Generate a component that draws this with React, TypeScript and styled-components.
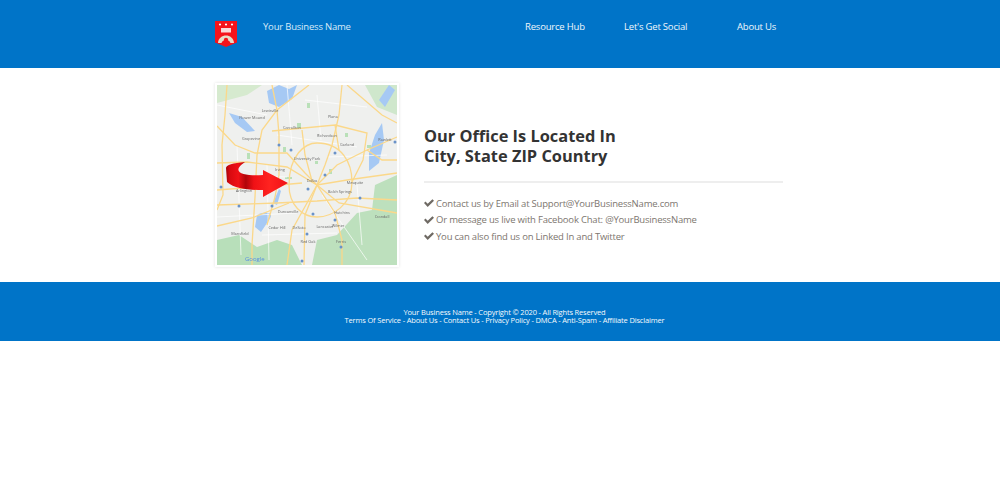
import React from "react";
import styled, { createGlobalStyle } from "styled-components";

const GlobalStyle = createGlobalStyle`
  html, body {
    margin: 0;
    padding: 0;
    background: #fff;
    font-family: "Open Sans", "Liberation Sans", sans-serif;
  }
`;

const Header = styled.header`
  height: 68px;
  background: #0074c8;
`;

const HeaderInner = styled.div`
  width: 570px;
  margin: 0 auto;
  display: flex;
  align-items: flex-start;
`;

const LogoWrap = styled.div`
  width: 48px;
  padding-top: 20px;
  flex-shrink: 0;
`;

const Brand = styled.a`
  width: 262px;
  padding-top: 19px;
  font-size: 9.5px;
  line-height: 15px;
  letter-spacing: -0.2px;
  color: #d9ebf8;
  flex-shrink: 0;
`;

const Nav = styled.nav`
  display: flex;
  padding-top: 19px;
`;

const NavLink = styled.a<{ $width: number }>`
  width: ${props => props.$width}px;
  font-size: 9.5px;
  line-height: 15px;
  letter-spacing: -0.2px;
  color: #f0f7fc;
`;

const Main = styled.main`
  width: 570px;
  height: 214px;
  margin: 0 auto;
  display: flex;
  align-items: flex-start;
`;

const MapFrame = styled.div`
  width: 180px;
  height: 180px;
  margin-top: 17px;
  margin-left: 2px;
  flex-shrink: 0;
  background: #fff;
  box-shadow: 0 0 0 2px #fff, 0 0 3px 2px rgba(0, 0, 0, 0.12);
  overflow: hidden;
`;

const Info = styled.div`
  margin-left: 27px;
  padding-top: 58px;
  width: 359px;
`;

const Title = styled.h1`
  margin: 0;
  font-size: 16.4px;
  line-height: 20px;
  font-weight: 700;
  color: #333;
`;

const Rule = styled.hr`
  margin: 15px 0 12px;
  border: 0;
  height: 2px;
  background: #eee;
`;

const List = styled.ul`
  margin: 0;
  padding: 0;
  list-style: none;
`;

const Item = styled.li`
  display: flex;
  align-items: center;
  gap: 2px;
  height: 16.5px;
  font-size: 9.5px;
  letter-spacing: -0.2px;
  color: #7d766f;
  white-space: nowrap;
`;

const Footer = styled.footer`
  height: 59px;
  background: #0074c8;
  padding: 26px 0 0 9px;
  box-sizing: border-box;
  text-align: center;
`;

const FooterLine = styled.div`
  font-size: 7.5px;
  line-height: 8px;
  letter-spacing: -0.17px;
  color: #f6fafd;
`;

const Check = () => (
  <svg width="10" height="8" viewBox="0 0 10 8">
    <path d="M0 4 L1.5 2.6 L3.7 4.8 L8.4 0.2 L10 1.7 L3.7 7.9 Z" fill="#6f6a64" />
  </svg>
);

const Logo = () => (
  <svg width="22" height="27" viewBox="0 0 22 27">
    <path d="M0 1 H22 V22.5 L11 27 L0 22.5 Z" fill="#f5131b" />
    <g fill="#fff">
      <circle cx="5" cy="4.5" r="1.1" />
      <circle cx="11" cy="4.5" r="1.1" />
      <circle cx="17" cy="4.5" r="1.1" />
    </g>
    <rect x="6" y="8" width="10" height="4.5" fill="#f9dada" />
    <path d="M3 23 C3.5 13 18.5 13 19 23 L15.5 23 C14.5 19 7.5 19 6.5 23 Z" fill="#e6dcc8" />
    <circle cx="11" cy="20" r="2.2" fill="#f5131b" />
    <rect x="10" y="20" width="2" height="4.5" fill="#f5131b" />
  </svg>
);

// [x, y, text]
const mapLabels: [number, number, string][] = [
  [35, 34, "Flower Mound"],
  [75, 44, "Carrollton"],
  [110, 52, "Richardson"],
  [130, 61, "Garland"],
  [34, 55, "Grapevine"],
  [90, 75, "University Park"],
  [63, 86, "Irving"],
  [95, 97, "Dallas"],
  [138, 99, "Mesquite"],
  [27, 107, "Arlington"],
  [123, 108, "Balch Springs"],
  [71, 128, "Duncanville"],
  [125, 129, "Hutchins"],
  [60, 144, "Cedar Hill"],
  [82, 144, "DeSoto"],
  [108, 143, "Lancaster"],
  [121, 142, "Wilmer"],
  [23, 150, "Mansfield"],
  [91, 158, "Red Oak"],
  [124, 158, "Ferris"],
  [116, 33, "Plano"],
  [53, 27, "Lewisville"],
  [168, 56, "Rowlett"],
  [165, 133, "Crandall"],
];

const roads = [
  "M0 41 L18 60 L38 68 L70 68 L88 88 L100 100 L122 118 L180 128",
  "M0 120 L60 118 L100 116 L140 113 L180 115",
  "M92 0 L60 25 L45 45 L40 70 L38 112 L35 160 L35 180",
  "M125 0 L122 30 L115 60 L108 80 L100 100 L88 130 L87 180",
  "M180 52 L150 65 L120 80 L100 100",
  "M0 78 L30 77 L70 82 L100 100 L130 95 L180 88",
  "M10 0 L8 30 L5 60 L6 110 L0 125",
  "M55 0 L60 25 L62 50 L62 90 L58 112 L50 140",
  "M100 100 L118 128 L125 155 L125 180",
  "M0 105 L40 102 L85 98",
  "M72 100 C72 70 88 58 100 58 C125 58 135 78 135 97 C135 120 115 132 100 132 C85 132 72 120 72 100",
  "M118 40 L150 48 L146 75 L135 97",
  "M55 46 L118 40 L122 65",
  "M85 45 L88 70 L95 96",
  "M150 65 L165 75 L180 75",
  "M100 100 L75 145 L70 180",
  "M0 141 L35 133 L72 118",
  "M130 0 L165 30 L180 38",
];

const streets = [
  "M0 20 L50 30", "M70 0 L75 60", "M100 10 L104 55", "M20 60 L24 170", "M50 80 L52 175",
  "M105 110 L150 175", "M140 100 L145 160", "M60 50 L140 62", "M10 90 L70 92", "M110 72 L170 70",
  "M0 132 L80 128", "M45 150 L120 148", "M88 15 L150 22",
];

const parks = [
  [80, 38, 4, 6], [90, 18, 3, 5], [66, 62, 3, 5], [128, 48, 3, 4], [150, 60, 4, 3],
  [112, 84, 3, 5], [68, 92, 7, 2], [30, 68, 3, 6], [42, 90, 3, 4], [98, 76, 3, 3],
];

const shields: [number, number][] = [
  [62, 60], [74, 65], [118, 68], [108, 90], [91, 104], [4, 102], [22, 121], [55, 121],
  [96, 129], [118, 135], [143, 113], [90, 149], [124, 162], [85, 176], [178, 57],
];

const ArrowMap = () => (
  <svg width="180" height="180" viewBox="0 0 180 180" style={{ display: "block" }}>
    <defs>
      <linearGradient id="ribbon" x1="0" x2="1" y1="0" y2="0">
        <stop offset="0" stopColor="#a40508" />
        <stop offset="0.06" stopColor="#d80a10" />
        <stop offset="0.2" stopColor="#f01116" />
        <stop offset="0.32" stopColor="#b00509" />
        <stop offset="0.45" stopColor="#f01116" />
        <stop offset="0.7" stopColor="#ff2320" />
        <stop offset="1" stopColor="#f01116" />
      </linearGradient>
      <filter id="soft">
        <feGaussianBlur stdDeviation="0.4" />
      </filter>
    </defs>
    <g filter="url(#soft)">
      <rect width="180" height="180" fill="#eff0ee" />
      <path d="M0 155 L22 150 L40 162 L60 155 L75 160 L85 180 L0 180 Z" fill="#b8dfba" />
      <path d="M95 180 L100 155 L120 150 L140 128 L155 125 L158 100 L180 90 L180 180 Z" fill="#bde0bd" />
      <path d="M148 0 L180 0 L180 30 L160 22 Z" fill="#cfe7cc" />
      <path d="M0 0 L45 0 L30 10 L0 18 Z" fill="#d6eacf" />
      <path d="M50 6 L62 0 L72 4 L80 0 L75 14 L62 22 L52 18 Z" fill="#a6c9f4" />
      <path d="M12 28 L25 32 L38 46 L30 47 L18 38 Z" fill="#a6c9f4" />
      <path d="M158 50 L165 38 L167 55 L162 78 L152 86 L152 68 Z" fill="#a6c9f4" />
      <path d="M162 15 L172 0 L178 5 L168 22 Z" fill="#a6c9f4" />
      <path d="M40 130 C50 125 58 128 52 135 L44 147 L38 142 Z" fill="#a6c9f4" />
      <path d="M56 118 L62 104 L64 106 L60 120 Z" fill="#a6c9f4" />
      {parks.map(([x, y, w, h]) => (
        <rect key={`${x}-${y}`} x={x} y={y} width={w} height={h} fill="#b9e0b8" />
      ))}
      {streets.map(d => (
        <path key={d} d={d} fill="none" stroke="#fff" strokeWidth="0.7" />
      ))}
      {roads.map(d => (
        <path key={d} d={d} fill="none" stroke="#fbd88a" strokeWidth="1.3" />
      ))}
      {shields.map(([x, y]) => (
        <circle key={`${x}-${y}`} cx={x} cy={y} r="1.5" fill="#6a92c8" />
      ))}
      {mapLabels.map(([x, y, text]) => (
        <text key={text} x={x} y={y} fontSize="3.8" fontFamily="Open Sans" fill="#666" textAnchor="middle">
          {text}
        </text>
      ))}
      <text x="28" y="176" fontSize="6" fontFamily="Open Sans" fill="#5a8fe0">Google</text>
    </g>
    <path d="M28 77 C16 78 9 80 9 83 L10 97 C18 104 32 105 46 105 L46 112 L71 98 L46 85 L46 90 C28 91 12 88 28 77 Z" fill="url(#ribbon)" />
  </svg>
);

export default function App() {
  return (
    <>
      <GlobalStyle />
      <Header>
        <HeaderInner>
          <LogoWrap>
            <Logo />
          </LogoWrap>
          <Brand>Your Business Name</Brand>
          <Nav>
            <NavLink $width={99}>Resource Hub</NavLink>
            <NavLink $width={113}>Let's Get Social</NavLink>
            <NavLink $width={48}>About Us</NavLink>
          </Nav>
        </HeaderInner>
      </Header>
      <Main>
        <MapFrame>
          <ArrowMap />
        </MapFrame>
        <Info>
          <Title>
            Our Office Is Located In
            <br />
            City, State ZIP Country
          </Title>
          <Rule />
          <List>
            <Item><Check /> Contact us by Email at Support@YourBusinessName.com</Item>
            <Item><Check /> Or message us live with Facebook Chat: @YourBusinessName</Item>
            <Item><Check /> You can also find us on Linked In and Twitter</Item>
          </List>
        </Info>
      </Main>
      <Footer>
        <FooterLine>Your Business Name - Copyright © 2020 - All Rights Reserved</FooterLine>
        <FooterLine>Terms Of Service - About Us - Contact Us - Privacy Policy - DMCA - Anti-Spam - Affiliate Disclaimer</FooterLine>
      </Footer>
    </>
  );
}
